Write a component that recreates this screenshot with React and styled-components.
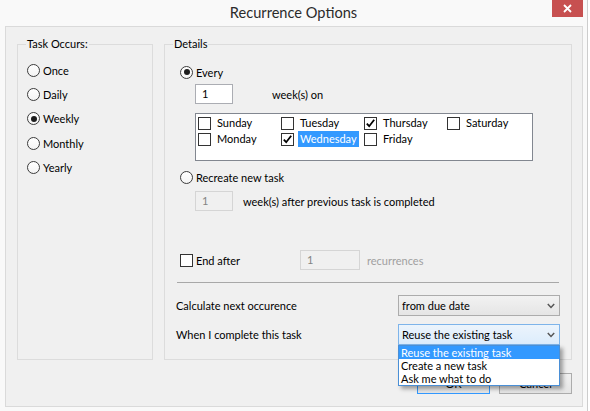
import React from 'react';
import styled, { createGlobalStyle } from 'styled-components';

const GlobalStyle = createGlobalStyle`
  html, body { margin: 0; padding: 0; background: #ffffff; }
  body { font-family: Lato, "Liberation Sans", sans-serif; font-size: 11px; color: #000; }
  * { box-sizing: border-box; }
`;

const Window = styled.div`
  width: 588px;
  height: 411px;
  background: #f9f9f9;
  border-right: 1px solid #cdcdcd;
  display: flex;
  flex-direction: column;
`;

const TitleBar = styled.div`
  height: 26px;
  display: grid;
  grid-template-columns: 1fr auto 1fr;
  align-items: start;
`;

const Title = styled.div`
  grid-column: 2;
  font-size: 14.6px;
  line-height: 26px;
  color: #2b2b2b;
`;

const CloseButton = styled.div`
  grid-column: 3;
  justify-self: end;
  width: 31px;
  height: 17px;
  margin-right: 4px;
  background: #c75050;
  display: flex;
  align-items: center;
  justify-content: center;
`;

const Body = styled.div`
  height: 381px;
  margin: 0 4px 0 5px;
  border: 1px solid #dadada;
  background: #f0f0f0;
  padding: 17px 10px 0 11px;
  display: flex;
  flex-direction: column;
`;

const Groups = styled.div`
  display: flex;
  gap: 11px;
  height: 316px;
`;

const GroupBox = styled.div`
  position: relative;
  width: ${p => p.$width}px;
  height: 100%;
  border: 1px solid #dcdcdc;
  display: flex;
  flex-direction: column;
  padding: ${p => p.$padding};
`;

const Legend = styled.span`
  position: absolute;
  top: -8px;
  left: 8px;
  padding: 0 1px;
  background: #f0f0f0;
  line-height: 14px;
`;

const OptionRow = styled.div`
  display: flex;
  align-items: center;
  gap: 3px;
  height: ${p => p.$h || 16}px;
  margin-top: ${p => p.$mt || 0}px;
  margin-left: ${p => p.$ml || 0}px;
`;

const RadioCircle = styled.span`
  width: 13px;
  height: 13px;
  border-radius: 50%;
  border: 1px solid #3c3c3c;
  background: linear-gradient(#ffffff, #f4f4f4);
  display: flex;
  align-items: center;
  justify-content: center;
  flex: none;
  &::after {
    content: '';
    display: ${p => (p.$checked ? 'block' : 'none')};
    width: 6px;
    height: 6px;
    border-radius: 50%;
    background: #1c1c1c;
  }
`;

const CheckSquare = styled.span`
  width: 13px;
  height: 13px;
  border: 1px solid #333;
  background: #fff;
  display: flex;
  align-items: center;
  justify-content: center;
  flex: none;
`;

const TextInput = styled.div`
  width: ${p => p.$w}px;
  height: 20px;
  border: 1px solid ${p => (p.$disabled ? '#d5d5d5' : '#abadb3')};
  background: ${p => (p.$disabled ? '#f0f0f0' : '#ffffff')};
  color: ${p => (p.$disabled ? '#838383' : '#000')};
  padding-left: 6px;
  line-height: 18px;
  flex: none;
`;

const InlineText = styled.span`
  margin-left: ${p => p.$ml || 0}px;
  color: ${p => (p.$muted ? '#a0a0a0' : '#000')};
  white-space: nowrap;
`;

const DayBox = styled.div`
  margin: 9px 0 0 15px;
  width: 338px;
  height: 48px;
  border: 1px solid #828790;
  background: #fff;
  padding: 1px 0 0 2px;
  display: grid;
  grid-template-columns: repeat(4, 83px);
  grid-auto-rows: 16px;
`;

const DayItem = styled.div`
  display: flex;
  align-items: center;
`;

const DayLabel = styled.span`
  margin-left: 4px;
  padding: 0 2px;
  line-height: 16px;
  background: ${p => (p.$selected ? '#3399ff' : 'transparent')};
  color: ${p => (p.$selected ? '#fff' : '#000')};
`;

const LabelSlot = styled.span`
  width: 101px;
`;

const Separator = styled.div`
  margin: 12px 12px 0 -3px;
  height: 1px;
  background: #a8a8a8;
`;

const FieldRow = styled.div`
  display: grid;
  grid-template-columns: 1fr 162px;
  align-items: center;
  margin-left: -15px;
  padding: 0 11px;
  margin-top: ${p => p.$mt}px;
  height: 21px;
`;

const SelectWrap = styled.div`
  position: relative;
  height: 21px;
`;

const SelectBox = styled.div`
  height: 21px;
  border: 1px solid ${p => (p.$open ? '#7eb4ea' : '#acacac')};
  background: ${p =>
    p.$open ? 'linear-gradient(#ecf4fc, #dcecfc)' : 'linear-gradient(#f2f2f2, #e5e5e5)'};
  display: flex;
  align-items: center;
  justify-content: space-between;
  padding: 0 4px 0 3px;
`;

const DropList = styled.div`
  position: absolute;
  top: 100%;
  left: 0;
  width: 162px;
  border: 1px solid #4a8fd6;
  background: #fff;
  box-shadow: 3px 3px 4px rgba(0, 0, 0, 0.35);
  z-index: 2;
`;

const DropItem = styled.div`
  height: 13px;
  line-height: 13px;
  padding-left: 2px;
  background: ${p => (p.$active ? '#3399ff' : '#fff')};
  color: ${p => (p.$active ? '#fff' : '#000')};
`;

const ButtonRow = styled.div`
  display: flex;
  justify-content: flex-end;
  gap: 9px;
  margin-top: 13px;
`;

const Button = styled.div`
  width: 73px;
  height: 21px;
  border: 1px solid ${p => (p.$default ? '#3399ff' : '#acacac')};
  background: linear-gradient(#f0f0f0, #e5e5e5);
  display: flex;
  align-items: center;
  justify-content: center;
`;

const Radio = ({ checked }) => <RadioCircle $checked={checked} />;

const Checkbox = ({ checked }) => (
  <CheckSquare>
    {checked && (
      <svg width="11" height="11" viewBox="0 0 11 11">
        <path d="M1.8 5.6 L4.2 8.2 L9.2 1.8" fill="none" stroke="#000" strokeWidth="1.8" />
      </svg>
    )}
  </CheckSquare>
);

const Chevron = () => (
  <svg width="8" height="6" viewBox="0 0 8 6">
    <path d="M0.8 1 L4 4.4 L7.2 1" fill="none" stroke="#555" strokeWidth="1.5" />
  </svg>
);

const days = [
  { name: 'Sunday' },
  { name: 'Tuesday' },
  { name: 'Thursday', checked: true },
  { name: 'Saturday' },
  { name: 'Monday' },
  { name: 'Wednesday', checked: true, selected: true },
  { name: 'Friday' },
];

const occurs = [
  { name: 'Once' },
  { name: 'Daily' },
  { name: 'Weekly', checked: true },
  { name: 'Monthly' },
  { name: 'Yearly' },
];

export default function App() {
  return (
    <>
      <GlobalStyle />
      <Window>
        <TitleBar>
          <Title>Recurrence Options</Title>
          <CloseButton>
            <svg width="9" height="9" viewBox="0 0 9 9">
              <path d="M1 1 L8 8 M8 1 L1 8" stroke="#fff" strokeWidth="1.8" />
            </svg>
          </CloseButton>
        </TitleBar>
        <Body>
          <Groups>
            <GroupBox $width={136} $padding="13px 0 0 9px">
              <Legend>Task Occurs:</Legend>
              {occurs.map(o => (
                <OptionRow key={o.name} $h={24.3}>
                  <Radio checked={o.checked} />
                  <span>{o.name}</span>
                </OptionRow>
              ))}
            </GroupBox>
            <GroupBox $width={408} $padding="0 0 0 15px">
              <Legend>Details</Legend>
              <OptionRow $mt={19}>
                <Radio checked />
                <span>Every</span>
              </OptionRow>
              <OptionRow $mt={4} $h={20} $ml={15}>
                <TextInput $w={38}>1</TextInput>
                <InlineText $ml={36}>week(s) on</InlineText>
              </OptionRow>
              <DayBox>
                {days.map(d => (
                  <DayItem key={d.name}>
                    <Checkbox checked={d.checked} />
                    <DayLabel $selected={d.selected}>{d.name}</DayLabel>
                  </DayItem>
                ))}
              </DayBox>
              <OptionRow $mt={8}>
                <Radio />
                <span>Recreate new task</span>
              </OptionRow>
              <OptionRow $mt={6} $h={20} $ml={15}>
                <TextInput $w={38} $disabled>1</TextInput>
                <InlineText $ml={7}>week(s) after previous task is completed</InlineText>
              </OptionRow>
              <OptionRow $mt={39} $h={20}>
                <Checkbox />
                <LabelSlot>End after</LabelSlot>
                <TextInput $w={60} $disabled>1</TextInput>
                <InlineText $ml={4} $muted>recurrences</InlineText>
              </OptionRow>
              <Separator />
              <FieldRow $mt={12}>
                <span>Calculate next occurence</span>
                <SelectWrap>
                  <SelectBox>
                    <span>from due date</span>
                    <Chevron />
                  </SelectBox>
                </SelectWrap>
              </FieldRow>
              <FieldRow $mt={8}>
                <span>When I complete this task</span>
                <SelectWrap>
                  <SelectBox $open>
                    <span>Reuse the existing task</span>
                    <Chevron />
                  </SelectBox>
                  <DropList>
                    <DropItem $active>Reuse the existing task</DropItem>
                    <DropItem>Create a new task</DropItem>
                    <DropItem>Ask me what to do</DropItem>
                  </DropList>
                </SelectWrap>
              </FieldRow>
            </GroupBox>
          </Groups>
          <ButtonRow>
            <Button $default>OK</Button>
            <Button>Cancel</Button>
          </ButtonRow>
        </Body>
      </Window>
    </>
  );
}
